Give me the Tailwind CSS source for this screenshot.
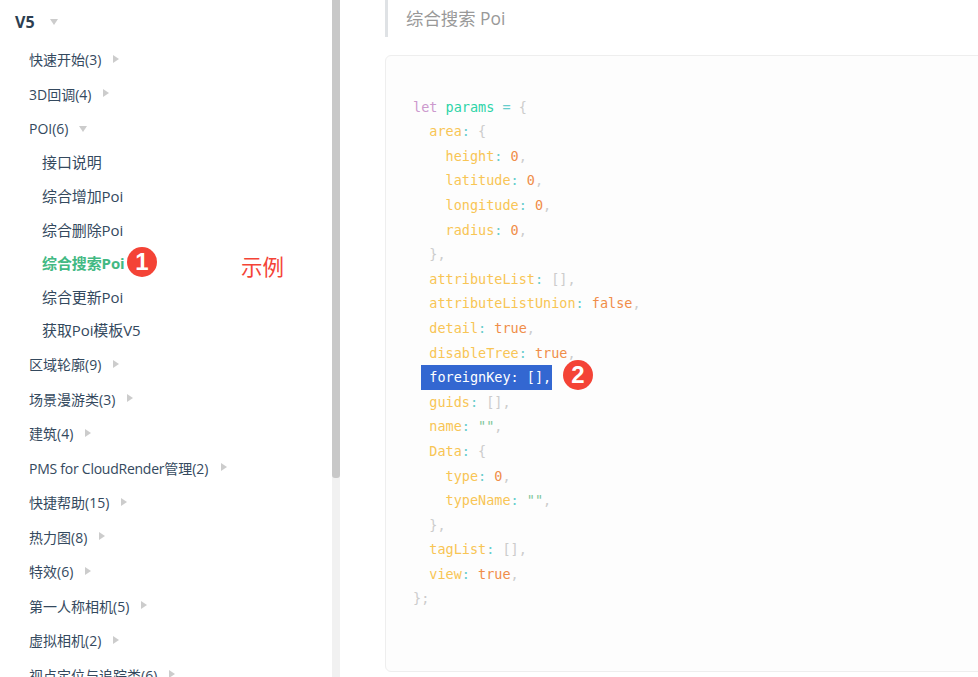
<!DOCTYPE html>
<html lang="zh-CN">
    <head>
        <meta charset="UTF-8" />
        <meta name="viewport" content="width=device-width, initial-scale=1.0" />
        <title>综合搜索 Poi</title>
        <script src="https://cdn.jsdelivr.net/npm/@tailwindcss/browser@4"></script>
    </head>
    <body class="bg-white overflow-hidden">
        <div class="flex h-[677px] w-[978px] overflow-hidden font-['Open_Sans','Noto_Sans_CJK_SC',sans-serif]">
            <!-- sidebar -->
            <aside class="relative w-[332px] shrink-0 text-[14px] text-[#34495e]">
                <div class="flex items-center h-[22px] mt-[11px] ml-[15px] text-[16px] font-bold text-[#2c3e50]">
                    V5
                    <span class="ml-[15px] border-x-[4px] border-t-[6px] border-x-transparent border-t-[#ccc]"></span>
                </div>
                <ul class="mt-[9.5px] ml-[29px]">
                    <li class="flex items-center h-[34.5px]">快速开始(3)<span class="ml-[12px] mb-[2px] border-y-[4px] border-l-[6px] border-y-transparent border-l-[#ccc]"></span></li>
                    <li class="flex items-center h-[34.5px]">3D回调(4)<span class="ml-[12px] mb-[2px] border-y-[4px] border-l-[6px] border-y-transparent border-l-[#ccc]"></span></li>
                    <li class="flex items-center h-[34.5px]">POI(6)<span class="ml-[11px] border-x-[4px] border-t-[6px] border-x-transparent border-t-[#ccc]"></span></li>
                </ul>
                <ul class="ml-[42px] text-[15px] tracking-[-0.1px]">
                    <li class="flex items-center h-[33.5px] pb-[1px]">接口说明</li>
                    <li class="flex items-center h-[33.5px]">综合增加Poi</li>
                    <li class="flex items-center h-[33.5px]">综合删除Poi</li>
                    <li class="flex items-center h-[33.5px] font-bold text-[#42b983]">综合搜索Poi</li>
                    <li class="flex items-center h-[33.5px]">综合更新Poi</li>
                    <li class="flex items-center h-[33.5px]">获取Poi模板V5</li>
                </ul>
                <ul class="ml-[29px] mt-[0.5px]">
                    <li class="flex items-center h-[34.5px]">区域轮廓(9)<span class="ml-[12px] mb-[2px] border-y-[4px] border-l-[6px] border-y-transparent border-l-[#ccc]"></span></li>
                    <li class="flex items-center h-[34.5px]">场景漫游类(3)<span class="ml-[12px] mb-[2px] border-y-[4px] border-l-[6px] border-y-transparent border-l-[#ccc]"></span></li>
                    <li class="flex items-center h-[34.5px]">建筑(4)<span class="ml-[12px] mb-[2px] border-y-[4px] border-l-[6px] border-y-transparent border-l-[#ccc]"></span></li>
                    <li class="flex items-center h-[34.5px]"><span class="tracking-[-0.25px]">PMS for CloudRender</span>管理(2)<span class="ml-[12px] mb-[2px] border-y-[4px] border-l-[6px] border-y-transparent border-l-[#ccc]"></span></li>
                    <li class="flex items-center h-[34.5px]">快捷帮助(15)<span class="ml-[12px] mb-[2px] border-y-[4px] border-l-[6px] border-y-transparent border-l-[#ccc]"></span></li>
                    <li class="flex items-center h-[34.5px]">热力图(8)<span class="ml-[12px] mb-[2px] border-y-[4px] border-l-[6px] border-y-transparent border-l-[#ccc]"></span></li>
                    <li class="flex items-center h-[34.5px]">特效(6)<span class="ml-[12px] mb-[2px] border-y-[4px] border-l-[6px] border-y-transparent border-l-[#ccc]"></span></li>
                    <li class="flex items-center h-[34.5px]">第一人称相机(5)<span class="ml-[12px] mb-[2px] border-y-[4px] border-l-[6px] border-y-transparent border-l-[#ccc]"></span></li>
                    <li class="flex items-center h-[34.5px]">虚拟相机(2)<span class="ml-[12px] mb-[2px] border-y-[4px] border-l-[6px] border-y-transparent border-l-[#ccc]"></span></li>
                    <li class="flex items-center h-[34.5px]">视点定位与追踪类(6)<span class="ml-[12px] mb-[2px] border-y-[4px] border-l-[6px] border-y-transparent border-l-[#ccc]"></span></li>
                </ul>
                <!-- annotation over the sidebar -->
                <span class="absolute left-[127px] top-[247px] flex items-center justify-center w-[30px] h-[30px] rounded-full bg-[#f44336] text-white text-[24px] font-bold font-['Liberation_Sans',sans-serif]">1</span>
                <span class="absolute left-[241px] top-[251px] text-[21.5px] text-[#f44336]">示例</span>
            </aside>

            <!-- scrollbar -->
            <div class="w-[8px] shrink-0 bg-[#f1f1f1]">
                <div class="h-[478px] rounded-b-[3px] bg-[#c8c8c8]"></div>
            </div>

            <!-- content -->
            <main class="flex-1 min-w-0 pl-[45px]">
                <div class="flex items-center h-[37px] border-l-[3px] border-[#dfe2e5] pl-[18px] text-[17.4px] text-[#999]">综合搜索 Poi</div>
                <div class="relative mt-[18px] h-[617px] w-[640px] pt-[38.6px] pl-[27px] bg-[#fdfdfd] border border-[#eee] rounded-[6px] text-[13.5px] leading-[24.6px] whitespace-pre font-['DejaVu_Sans_Mono',monospace] text-[#ccc]"><div><span class="text-[#cc99cd]">let</span> <span class="text-[#2dd4a8]">params</span> <span class="text-[#67cdcc]">=</span> {</div><div>  <span class="text-[#f8c555]">area</span><span class="text-[#67cdcc]">:</span> {</div><div>    <span class="text-[#f8c555]">height</span><span class="text-[#67cdcc]">:</span> <span class="text-[#f08d49]">0</span>,</div><div>    <span class="text-[#f8c555]">latitude</span><span class="text-[#67cdcc]">:</span> <span class="text-[#f08d49]">0</span>,</div><div>    <span class="text-[#f8c555]">longitude</span><span class="text-[#67cdcc]">:</span> <span class="text-[#f08d49]">0</span>,</div><div>    <span class="text-[#f8c555]">radius</span><span class="text-[#67cdcc]">:</span> <span class="text-[#f08d49]">0</span>,</div><div>  },</div><div>  <span class="text-[#f8c555]">attributeList</span><span class="text-[#67cdcc]">:</span> [],</div><div>  <span class="text-[#f8c555]">attributeListUnion</span><span class="text-[#67cdcc]">:</span> <span class="text-[#f08d49]">false</span>,</div><div>  <span class="text-[#f8c555]">detail</span><span class="text-[#67cdcc]">:</span> <span class="text-[#f08d49]">true</span>,</div><div>  <span class="text-[#f8c555]">disableTree</span><span class="text-[#67cdcc]">:</span> <span class="text-[#f08d49]">true</span>,</div><div>  <span class="relative"><span class="absolute left-[-8px] top-[-4px] w-[131px] h-[25px] bg-[#3367d1]"></span><span class="relative text-white">foreignKey: [],</span></span></div><div>  <span class="text-[#f8c555]">guids</span><span class="text-[#67cdcc]">:</span> [],</div><div>  <span class="text-[#f8c555]">name</span><span class="text-[#67cdcc]">:</span> <span class="text-[#7ec699]">""</span>,</div><div>  <span class="text-[#f8c555]">Data</span><span class="text-[#67cdcc]">:</span> {</div><div>    <span class="text-[#f8c555]">type</span><span class="text-[#67cdcc]">:</span> <span class="text-[#f08d49]">0</span>,</div><div>    <span class="text-[#f8c555]">typeName</span><span class="text-[#67cdcc]">:</span> <span class="text-[#7ec699]">""</span>,</div><div>  },</div><div>  <span class="text-[#f8c555]">tagList</span><span class="text-[#67cdcc]">:</span> [],</div><div>  <span class="text-[#f8c555]">view</span><span class="text-[#67cdcc]">:</span> <span class="text-[#f08d49]">true</span>,</div><div>};</div><span class="absolute left-[177px] top-[304px] flex items-center justify-center w-[30px] h-[30px] rounded-full bg-[#f44336] text-white text-[24px] font-bold font-['Liberation_Sans',sans-serif]">2</span></div>
            </main>
        </div>
    </body>
</html>
